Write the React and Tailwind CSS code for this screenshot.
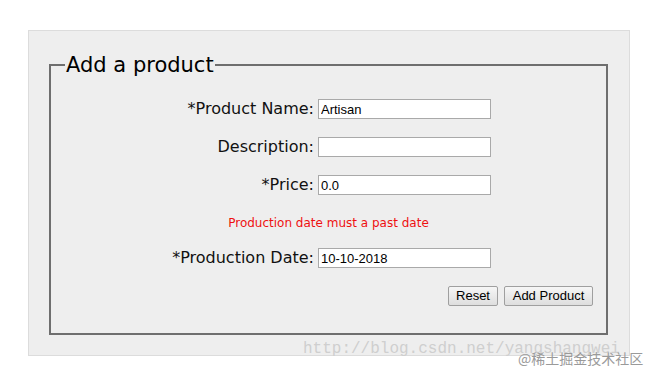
import React from "react"

const Field = ({ label, value }) => (
  <div className="flex items-center h-[20px]">
    <label className="w-[267px] pr-[4px] text-right text-[16px] leading-[20px] text-[#111]">
      {label}
    </label>
    <input
      type="text"
      defaultValue={value}
      className="w-[173px] h-[20px] bg-white border border-[#a9a9a9] px-[2px] text-[13px] text-black outline-none font-['Liberation_Sans',Arial,sans-serif]"
    />
  </div>
)

const Btn = ({ children, w }) => (
  <button
    className={`${w} h-[20px] rounded-[2px] border border-[#9f9f9f] bg-gradient-to-b from-[#f6f6f6] to-[#dedede] text-[13px] leading-[18px] text-black font-['Liberation_Sans',Arial,sans-serif]`}
  >
    {children}
  </button>
)

const App = () => {
  return (
    <div className="relative w-[645px] h-[372px] bg-white overflow-hidden font-['DejaVu_Sans',Verdana,sans-serif]">
      <div className="ml-[28px] mt-[30px] w-[602px] h-[326px] bg-[#eeeeee] border border-[#dcdcdc]">
        <fieldset className="ml-[20px] mt-[21px] w-[559px] border-2 border-[#6e6e6e] pb-[27px]">
          <legend className="ml-[14px] px-[1px] text-[21px] leading-[26px] text-black">
            Add a product
          </legend>
          <div className="flex flex-col gap-[18px] pt-[21px]">
            <Field label="*Product Name:" value="Artisan" />
            <Field label="Description:" value="" />
            <Field label="*Price:" value="0.0" />
            <p className="h-[17px] pt-[2px] text-center text-[12px] leading-[17px] text-[#ee1111]">
              Production date must a past date
            </p>
            <Field label="*Production Date:" value="10-10-2018" />
            <div className="flex justify-end gap-[6px] pr-[13px]">
              <Btn w="w-[50px]">Reset</Btn>
              <Btn w="w-[89px]">Add Product</Btn>
            </div>
          </div>
        </fieldset>
      </div>

      <span className="absolute left-[303px] top-[339px] text-[16px] leading-[20px] text-[#cfcfcf] font-['Liberation_Mono','Courier_New',monospace] whitespace-nowrap">
        http://blog.csdn.net/yangshangwei
      </span>
      <span className="absolute left-[518px] top-[349px] text-[14px] leading-[18px] text-[#9a9a9a] font-['Noto_Sans_CJK_SC',sans-serif] whitespace-nowrap">
        @稀土掘金技术社区
      </span>
    </div>
  )
}

export default App
